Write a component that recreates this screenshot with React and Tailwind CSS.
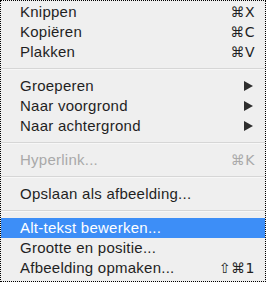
import React from 'react';

const items = [
    { label: 'Knippen', shortcut: '⌘X' },
    { label: 'Kopiëren', shortcut: '⌘C' },
    { label: 'Plakken', shortcut: '⌘V' },
    { sep: true },
    { label: 'Groeperen', submenu: true },
    { label: 'Naar voorgrond', submenu: true },
    { label: 'Naar achtergrond', submenu: true },
    { sep: true },
    { label: 'Hyperlink...', shortcut: '⌘K', disabled: true },
    { sep: true },
    { label: 'Opslaan als afbeelding...' },
    { sep: true },
    { label: 'Alt-tekst bewerken...', active: true },
    { label: 'Grootte en positie...' },
    { label: 'Afbeelding opmaken...', shortcut: '⇧⌘1' },
];

const Arrow = () => (
    <svg width="9" height="10" viewBox="0 0 9 10" className="mr-[2px]">
        <polygon points="0,0 9,5 0,10" fill="#2e2e2e" />
    </svg>
);

const App = () => {
    return (
        <div className="w-[266px] h-[282px] border border-dotted border-black bg-[#efefef] pt-[1px] font-['Liberation_Sans',sans-serif] text-[15px] tracking-[0.25px] text-[#1f1f1f]">
            {items.map((item, i) => {
                if (item.sep) {
                    return (
                        <div key={i} className="h-[14px] flex flex-col justify-center">
                            <div className="h-px bg-[#d6d6d6]" />
                            <div className="h-px bg-[#f7f7f7]" />
                        </div>
                    );
                }
                const rowClass = item.active
                    ? 'bg-[#3d8ef7] text-white'
                    : item.disabled
                    ? 'text-[#a9a9a9]'
                    : '';
                return (
                    <div key={i} className={`h-[20px] leading-[20px] flex items-center justify-between pl-[19px] pr-[10px] ${rowClass}`}>
                        <span>{item.label}</span>
                        {item.shortcut && (
                            <span className="font-['DejaVu_Sans',sans-serif] text-[14px] tracking-[0.5px]">{item.shortcut}</span>
                        )}
                        {item.submenu && <Arrow />}
                    </div>
                );
            })}
        </div>
    );
};

export default App;
